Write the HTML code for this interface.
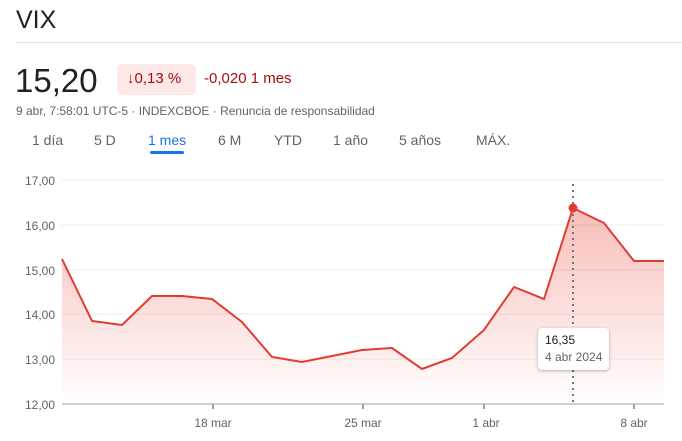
<!DOCTYPE html><html><head><style>
body{margin:0;width:682px;height:441px;background:#fff;font-family:"Liberation Sans",Arial,sans-serif;overflow:hidden;position:relative}
.a{position:absolute;white-space:nowrap}
</style></head><body>
<div class="a" style="left:16px;top:6px;font-size:25px;color:#202124">VIX</div>
<div class="a" style="left:16px;top:42px;width:666px;height:1px;background:#e3e3e3"></div>
<div class="a" style="left:15px;top:62px;font-size:33px;color:#202124">15,20</div>
<div class="a" style="left:117px;top:64px;width:79px;height:31px;background:#fce8e6;border-radius:6px"></div>
<div class="a" style="left:127px;top:70px;font-size:15px;color:#a50e0e">↓0,13 %</div>
<div class="a" style="left:204px;top:70px;font-size:15px;color:#a50e0e">-0,020 1 mes</div>
<div class="a" style="left:16px;top:104px;font-size:12px;color:#5f6368">9 abr, 7:58:01 UTC-5 · INDEXCBOE · Renuncia de responsabilidad</div>
<div class="a" style="top:132px;font-size:14px;color:#5f6368;left:0;width:682px">
<span class="a" style="left:32px">1 día</span><span class="a" style="left:94px">5 D</span><span class="a" style="left:148px;color:#1a73e8">1 mes</span><span class="a" style="left:218px">6 M</span><span class="a" style="left:274px">YTD</span><span class="a" style="left:333px">1 año</span><span class="a" style="left:399px">5 años</span><span class="a" style="left:476px">MÁX.</span></div>
<div class="a" style="left:150px;top:151px;width:34px;height:3px;background:#1a73e8;border-radius:2px"></div>
<svg class="a" style="left:0;top:0" width="682" height="441">
<defs><linearGradient id="g" x1="0" y1="0" x2="0" y2="1"><stop offset="0" stop-color="#ea4335" stop-opacity=".35"/><stop offset="1" stop-color="#ea4335" stop-opacity="0"/></linearGradient></defs>
<g stroke="#ebebeb"><line x1="62" x2="664" y1="180" y2="180"/><line x1="62" x2="664" y1="225" y2="225"/><line x1="62" x2="664" y1="270" y2="270"/><line x1="62" x2="664" y1="314" y2="314"/><line x1="62" x2="664" y1="359" y2="359"/></g>
<path d="M62,259 92,321 122,325 152,296 182,296 212,299 242,322 272,357 302,362 332,356 362,350 392,348 422,369 452,358 484,330 514,287 544,299 573,208 604,223 634,261 664,261 664,404 62,404Z" fill="url(#g)"/>
<polyline points="62,259 92,321 122,325 152,296 182,296 212,299 242,322 272,357 302,362 332,356 362,350 392,348 422,369 452,358 484,330 514,287 544,299 573,208 604,223 634,261 664,261" fill="none" stroke="#e03c31" stroke-width="2"/>
<line x1="62" x2="664" y1="404" y2="404" stroke="#9aa0a6"/>
<g stroke="#9aa0a6" stroke-width="2"><line x1="213" x2="213" y1="404" y2="409"/><line x1="363" x2="363" y1="404" y2="409"/><line x1="484" x2="484" y1="404" y2="409"/><line x1="634" x2="634" y1="404" y2="409"/></g>
<line x1="573" x2="573" y1="184" y2="404" stroke="#70757a" stroke-width="2" stroke-dasharray="2,4"/>
<circle cx="573" cy="208" r="4.5" fill="#e03c31"/>
<g font-size="12" fill="#5f6368" text-anchor="end"><text x="55" y="185">17,00</text><text x="55" y="230">16,00</text><text x="55" y="275">15,00</text><text x="55" y="319">14,00</text><text x="55" y="364">13,00</text><text x="55" y="409">12,00</text></g>
<g font-size="12" fill="#5f6368" text-anchor="middle"><text x="213" y="427">18 mar</text><text x="363" y="427">25 mar</text><text x="486" y="427">1 abr</text><text x="634" y="427">8 abr</text></g>
</svg>
<div class="a" style="left:538px;top:328px;width:71px;height:42px;background:#fff;border-radius:4px;box-shadow:0 1px 3px rgba(0,0,0,.3)"></div>
<div class="a" style="left:545px;top:333px;font-size:12px;color:#202124">16,35</div>
<div class="a" style="left:545px;top:350px;font-size:12px;color:#5f6368">4 abr 2024</div>
</body></html>
